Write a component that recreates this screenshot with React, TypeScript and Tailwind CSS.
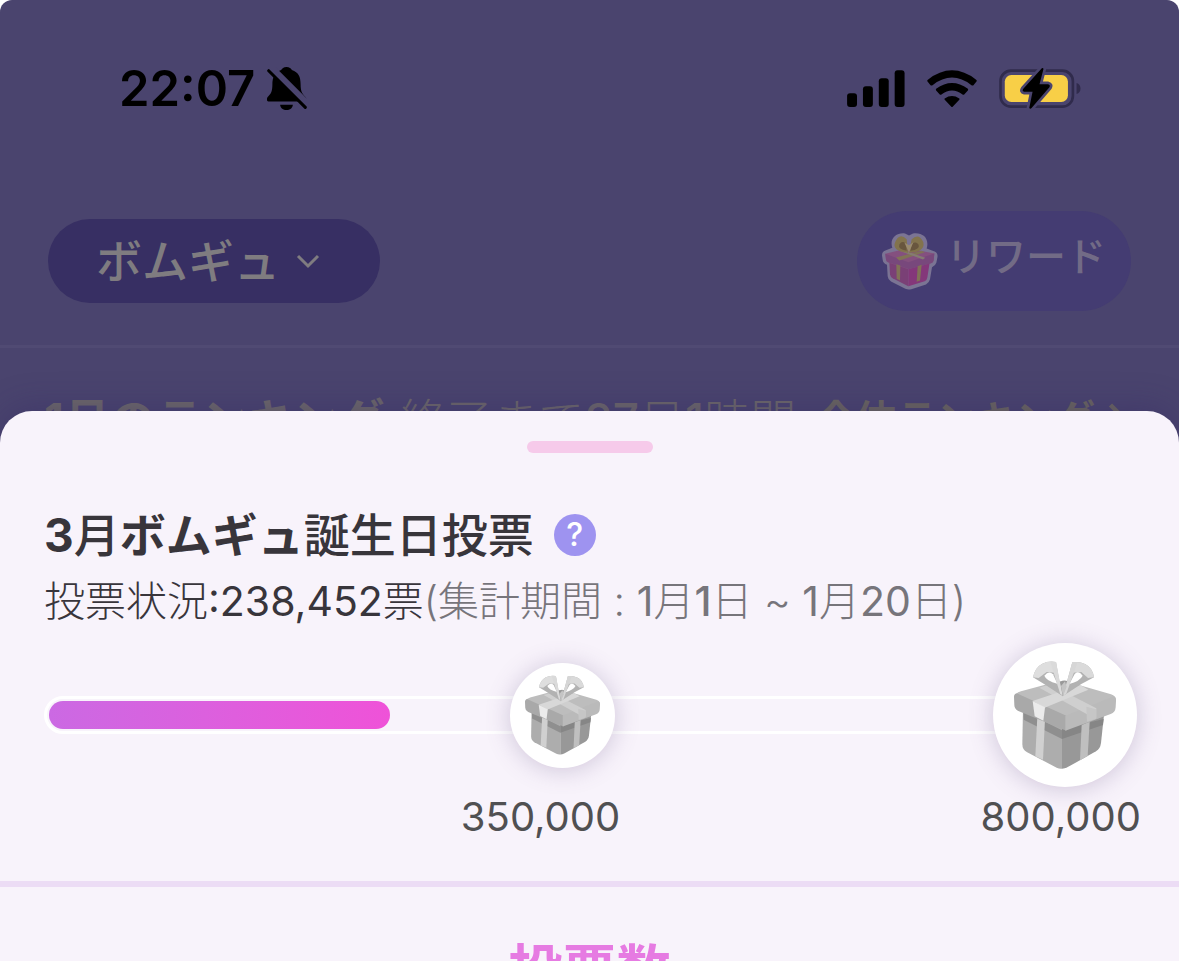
import type { ReactNode } from 'react';

function BellOffIcon() {
  return (
    <svg viewBox="503 50 119 128" className="h-[43px] w-10" aria-hidden="true">
      <path
        d="M561 50c-9 0-13 5-16 9-19 7-26 22-26 43 0 20-4 27-12 35-4 4-5 8-4 12 1 3 3 4 7 4h102c4 0 7-1 8-4 1-4-1-8-5-12-8-9-12-16-12-35 0-23-6-36-26-43-3-5-7-9-16-9z"
        fill="#000"
      />
      <path d="M512 50 624 162" stroke="#4a446e" strokeWidth="22" />
      <path d="M542 162h38c-1 10-9 16-19 16s-18-6-19-16z" fill="#000" />
      <path d="M508 61 617 170" stroke="#000" strokeWidth="9" strokeLinecap="round" />
    </svg>
  );
}

function SignalIcon() {
  return (
    <svg viewBox="48 56 175 112" className="h-[37px] w-[58px]" aria-hidden="true">
      <rect x="48" y="126" width="30" height="42" rx="9" />
      <rect x="96" y="105" width="30" height="63" rx="9" />
      <rect x="144" y="81" width="30" height="87" rx="9" />
      <rect x="192" y="57" width="30" height="111" rx="9" />
    </svg>
  );
}

function WifiIcon() {
  return (
    <svg viewBox="289 56 150 112" className="h-[37px] w-[50px]" aria-hidden="true">
      <path d="M290 86q74-58 148 0 2 3 0 5l-9 11q-3 2-6 0-59-46-118 0-3 2-6 0l-9-11q-2-2 0-5z" />
      <path d="M316 113q48-36 96 0 2 3 0 5l-11 12q-3 2-5 0-32-24-64 0-2 2-5 0l-11-12q-2-2 0-5z" />
      <path d="M342 142q22-15 44 0 2 2 0 4l-20 21q-2 2-4 0l-20-21q-2-2 0-4z" />
    </svg>
  );
}

function BatteryIcon() {
  return (
    <svg viewBox="507 50 247 124" className="h-[41px] w-[82px]" aria-hidden="true">
      <rect x="511" y="58" width="219" height="109" rx="32" fill="none" stroke="#302b4c" strokeWidth="8" />
      <rect x="524" y="71" width="191" height="82" rx="20" fill="#f8cf47" />
      <path d="M741 95q12 4 12 17t-12 17z" fill="#302b4c" />
      <path
        d="M636 51 580 113q-5 8 3 9h25l-10 49q3 4 7 0l54-63q4-7-4-9h-26l12-46q-1-4-5-2z"
        fill="#000"
        stroke="#4a446e"
        strokeWidth="16"
        strokeLinejoin="round"
      />
      <path d="M636 51 580 113q-5 8 3 9h25l-10 49q3 4 7 0l54-63q4-7-4-9h-26l12-46q-1-4-5-2z" fill="#000" />
    </svg>
  );
}

function GiftIcon({ className }: { className: string }) {
  return (
    <svg viewBox="131 88 306 324" className={className} aria-hidden="true">
      {/* box */}
      <path d="M158 230 275 290V411q-8 1-16-3L169 361q-13-7-13-24z" fill="#adadad" />
      <path d="M275 290 402 240 392 334q-2 17-15 25l-86 48q-8 4-16 4z" fill="#989898" />
      <path d="M159 238 275 296V322L160 264z" fill="#8f8f8f" />
      <path d="M275 292 400 262 398 280 275 322z" fill="#868686" />
      <path d="M201 255 224 262 218 384 195 374z" fill="#d0d0d0" />
      <path d="M334 280 358 270 352 373 329 386z" fill="#bfbfbf" />
      {/* lid */}
      <path d="M152 179 258 150q17-4 34 0l130 38q15 5 15 17L285 262 131 196q6-13 21-17z" fill="#bdbdbd" />
      <path d="M131 196q0-9 8-11L288 252V297L144 238q-12-6-12-18z" fill="#a9a9a9" />
      <path d="M285 252 430 194q8 4 7 14l-1 19q-1 15-15 20L285 297z" fill="#bababa" />
      <path d="M207 168 238 158 378 230V258L354 250z" fill="#cfcfcf" />
      <path d="M187 208 330 160 354 174 223 228z" fill="#d8d8d8" />
      <path d="M187 208 224 227 219 267 193 254z" fill="#ebebeb" />
      <path d="M348 225 377 233V261L350 270z" fill="#c6c6c6" />
      {/* bow */}
      <path d="M258 160q24-27 48 0l-29 34z" fill="#989898" />
      <path d="M188 137q6-30 28-41 18-9 41-5l18 101-55-36z" fill="#b2b2b2" />
      <path d="M371 137q-4-29-27-40-18-9-38-5l-28 101 55-36z" fill="#b2b2b2" />
      <path d="M188 137q6-30 28-41 18-9 41-5l5 33-33-3-24 18z" fill="#dedede" />
      <path d="M371 137q-4-29-27-40-18-9-38-5l-8 32 35-3 20 18z" fill="#dadada" />
      <path d="M222 132q14-17 26-4l13 28q-33-8-39-24z" fill="#fff" />
      <path d="M337 132q-13-17-24-5l-16 30q31-8 40-25z" fill="#fff" />
      <path d="M240 91h17l20 101-8-7z" fill="#dadada" />
      <path d="M306 91h16l-34 95-10 7z" fill="#d6d6d6" />
      <path d="m272 163 12-14 5 16-11 29z" fill="#c4c4c4" />
    </svg>
  );
}

function RewardGiftIcon() {
  return (
    <svg viewBox="126 95 168 173" className="h-[58px] w-14" aria-hidden="true">
      <path
        d="M157 142c-10-28 14-47 38-43l12 6 12-6c30-4 50 15 41 45l24 9q11 5 8 19l-3 15q-2 8-13 13l-6 36q-3 11-12 16l-44 14q-9 3-18-1l-43-22q-9-5-10-16l-2-34q-12-4-13-15l-2-14q0-11 10-14z"
        fill="#7b7494"
      />
      <path d="m148 183 57 20v54l-47-24q-7-4-8-12z" fill="#7a4076" />
      <path d="m205 203 64-17-7 45q-1 8-8 11l-49 15z" fill="#84377a" />
      <path d="m136 160 67-17 80 16-2 20q-1 7-8 9l-68 18-60-20q-6-2-7-8z" fill="#84507f" />
      <path d="m136 160 69 25v20l-60-20q-6-2-7-8zM205 185l78-26-2 20q-1 7-8 9l-68 18z" fill="#78487c" />
      <path d="m168 171 76-20 11 4-77 25zM169 191l12 4-1 45-10-5zM233 197l12-4-5 47-10 4z" fill="#817257" />
      <path d="m178 151 9-3 69 24-7 5z" fill="#857b72" />
      <path d="M204 157q-48-5-39-31 13-31 35-10zM207 157q49-3 43-32-13-29-35-9z" fill="#82734d" />
      <path d="M200 151q-27-5-22-19 8-13 20-3zM211 151q30-4 25-18-8-13-20-3z" fill="#68563e" />
      <path d="m193 126 14 30 13-31-13 9z" fill="#9a8b70" />
    </svg>
  );
}

function ChevronIcon({ className, d }: { className: string; d: string }) {
  return (
    <svg viewBox="0 0 24 24" className={className} fill="none" stroke="currentColor" strokeWidth="3" aria-hidden="true">
      <path d={d} />
    </svg>
  );
}

function Milestone({ className, children }: { className: string; children: ReactNode }) {
  return (
    <div className={`flex items-center justify-center rounded-full bg-white shadow-[0_2px_24px_rgba(110,90,140,0.3)] ${className}`}>
      {children}
    </div>
  );
}

export default function App() {
  return (
    <div className="h-screen overflow-hidden bg-white font-['Inter','Noto_Sans_CJK_JP',sans-serif]">
      <div className="flex min-h-full flex-col rounded-t-xl bg-[#4a446e]">
        {/* Status bar */}
        <div className="flex items-center justify-between pt-14 pr-[98px] pl-[119px] text-black">
          <div className="flex h-16 items-center gap-3">
            <span className="text-[49px] leading-none font-semibold">22:07</span>
            <BellOffIcon />
          </div>
          <div className="flex items-center gap-[22px]">
            <SignalIcon />
            <WifiIcon />
            <BatteryIcon />
          </div>
        </div>

        {/* Header */}
        <header className="flex items-center justify-between border-b-[3px] border-[#504a73] px-12 pt-[91px] pb-[34px]">
          <button type="button" className="flex h-[84px] items-center gap-4 rounded-full bg-[#372f63] pr-[60px] pl-12 text-[46px] leading-none font-medium text-[#7f7c80]">
            ボムギュ
            <ChevronIcon className="h-6 w-6" d="M2 7l10 10 10-10" />
          </button>
          <button type="button" className="flex h-[100px] items-center gap-2 rounded-full bg-[#443c72] px-[25px] text-[40px] leading-none font-medium text-[#726b86]">
            <RewardGiftIcon />
            <span className="pb-2">リワード</span>
          </button>
        </header>

        {/* Ranking */}
        <div className="flex h-26 items-center justify-between pt-10 pr-10 pl-11 whitespace-nowrap text-[#6d6869]">
          <p className="flex items-center gap-4 leading-none">
            <span className="text-[46px] font-bold">1月のランキング</span>
            <span className="text-[46px] font-light">
              終了まで<span className="font-medium">27</span>日<span className="font-medium">1</span>時間
            </span>
          </p>
          <a href="#ranking" className="flex items-center gap-2 text-[40px] leading-none font-bold text-[#6b665f]">
            全体ランキング
            <ChevronIcon className="h-9 w-9" d="M5 2l10 10-10 10" />
          </a>
        </div>

        {/* Bottom sheet */}
        <main className="-mt-[41px] grow rounded-t-[32px] bg-[#f8f3fb] pt-[30px] text-[#38353b] shadow-[0_-4px_32px_rgba(48,38,100,0.35)]">
          <div className="mx-auto h-3 w-[126px] rounded-full bg-[#f6caea]" />

          <section className="mt-[50px] pr-[38px] pl-11">
            <div className="flex h-16 items-center gap-5">
              <h1 className="text-[46px] leading-none font-bold">
                3<span className="font-medium">月</span>ボムギュ<span className="font-medium">誕生日投票</span>
              </h1>
              <button type="button" aria-label="ヘルプ" className="flex h-[42px] w-[42px] items-center justify-center rounded-full bg-[#9e93f0] text-[32px] leading-none font-medium text-white">
                ?
              </button>
            </div>
            <p className="mt-1.5 text-[41px] leading-[56px] font-light whitespace-nowrap">
              投票状況<span className="font-normal">:238,452</span>票
              <span className="text-[#77757b]">
                (集計期間 : <span className="font-normal">1</span>月<span className="font-medium">1</span>日 ~{' '}
                <span className="font-normal">1</span>月<span className="font-normal">20</span>日)
              </span>
            </p>

            <div className="mt-3.5 grid items-center">
              <div className="col-start-1 row-start-1 mr-1 rounded-full border-[3px] border-white p-[2px]">
                <div className="h-7 w-[31.5%] rounded-full bg-linear-to-r from-[#cb69e3] to-[#ef52d8]" />
              </div>
              <div className="col-start-1 row-start-1 flex items-center justify-between pr-1 pl-[42.5%]">
                <Milestone className="h-[105px] w-[105px]">
                  <GiftIcon className="h-20 w-[75px]" />
                </Milestone>
                <Milestone className="h-36 w-36">
                  <GiftIcon className="h-[108px] w-[102px]" />
                </Milestone>
              </div>
            </div>
            <div className="mt-1.5 flex justify-between pl-[38%] text-[40px] leading-[48px] text-[#505052]">
              <span>350,000</span>
              <span>800,000</span>
            </div>
          </section>

          <section className="mt-10 border-t-[6px] border-[#ecdcf5] pt-12 text-center">
            <h2 className="text-[54px] leading-[72px] font-bold text-[#e67be2]">投票数</h2>
          </section>
        </main>
      </div>
    </div>
  );
}
